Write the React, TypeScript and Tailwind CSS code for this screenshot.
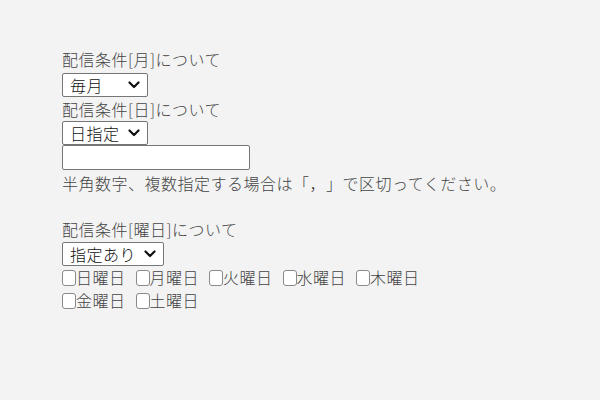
import React from 'react';

function Chevron() {
  return (
    <svg width="12" height="8" viewBox="0 0 12 8" className="shrink-0">
      <path d="M1.5 1.5 L6 6 L10.5 1.5" fill="none" stroke="#111" strokeWidth="2.2" strokeLinecap="round" strokeLinejoin="round" />
    </svg>
  );
}

function FakeSelect({ label, width }: { label: string; width: string }) {
  return (
    <div
      className={`flex h-[24px] items-center justify-between rounded-[2px] border border-[#767676] bg-white pl-[7px] pr-[7px] text-[16px] leading-none text-[#111] ${width}`}
    >
      <span>{label}</span>
      <Chevron />
    </div>
  );
}

const days = ['日曜日', '月曜日', '火曜日', '水曜日', '木曜日', '金曜日', '土曜日'];

export default function App() {
  return (
    <div
      className="min-h-[400px] w-[600px] bg-[#f3f3f3] pl-[62px] pt-[47px] text-[16px] font-light tracking-[0.5px] text-[#444] [text-spacing-trim:space-all]"
      style={{ fontFamily: '"Noto Sans CJK JP", "Noto Sans", sans-serif' }}
    >
      <div className="w-[450px]">
        <div className="leading-[24px]">配信条件[月]について</div>
        <div className="mt-[2px]">
          <FakeSelect label="毎月" width="w-[86px]" />
        </div>
        <div className="leading-[24px]">配信条件[日]について</div>
        <FakeSelect label="日指定" width="w-[86px]" />
        <div className="h-[25px] w-[188px] rounded-[2px] border border-[#767676] bg-white" />
        <div className="mt-[1px] leading-[24px]">半角数字、複数指定する場合は「，」で区切ってください。</div>
        <div className="h-[22px]" />
        <div className="leading-[24px]">配信条件[曜日]について</div>
        <div className="mt-[1px]">
          <FakeSelect label="指定あり" width="w-[102px]" />
        </div>
        <div className="flex w-[420px] flex-wrap">
          {days.map((d) => (
            <label key={d} className="mr-[10px] flex h-[23px] items-center leading-[23px]">
              <span className="h-[16px] w-[14px] rounded-[3px] border border-[#8a8a8a] bg-white" />
              <span>{d}</span>
            </label>
          ))}
        </div>
      </div>
    </div>
  );
}
